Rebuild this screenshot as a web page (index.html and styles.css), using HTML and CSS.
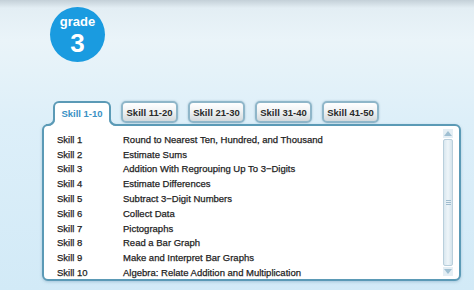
FILE: index.html
```html
<!DOCTYPE html>
<html lang="en">
  <head>
    <meta charset="UTF-8" />
    <meta name="viewport" content="width=device-width, initial-scale=1.0" />
    <title>Grade 3 Skills</title>
    <link rel="stylesheet" href="styles.css">
  </head>
  <body>
    <div class="page">
      <!-- grade badge -->
      <div class="top">
        <div class="badge">
          <span class="badge-word">grade</span>
          <span class="badge-num">3</span>
        </div>
      </div>

      <div class="skills">
        <div class="tabs">
          <div class="tab active">Skill 1-10</div>
          <div class="tab">Skill 11-20</div>
          <div class="tab">Skill 21-30</div>
          <div class="tab">Skill 31-40</div>
          <div class="tab">Skill 41-50</div>
        </div>

        <div class="panel">
          <ul class="skill-list">
            <li><span class="num">Skill 1</span><span class="name">Round to Nearest Ten, Hundred, and Thousand</span></li>
            <li><span class="num">Skill 2</span><span class="name">Estimate Sums</span></li>
            <li><span class="num">Skill 3</span><span class="name">Addition With Regrouping Up To 3&minus;Digits</span></li>
            <li><span class="num">Skill 4</span><span class="name">Estimate Differences</span></li>
            <li><span class="num">Skill 5</span><span class="name">Subtract 3&minus;Digit Numbers</span></li>
            <li><span class="num">Skill 6</span><span class="name">Collect Data</span></li>
            <li><span class="num">Skill 7</span><span class="name">Pictographs</span></li>
            <li><span class="num">Skill 8</span><span class="name">Read a Bar Graph</span></li>
            <li><span class="num">Skill 9</span><span class="name">Make and Interpret Bar Graphs</span></li>
            <li><span class="num">Skill 10</span><span class="name">Algebra: Relate Addition and Multiplication</span></li>
          </ul>

          <!-- scrollbar -->
          <div class="scrollbar">
            <div class="arrow up"></div>
            <div class="thumb"><span class="grip"></span></div>
            <div class="arrow down"></div>
          </div>
        </div>
      </div>
    </div>
  </body>
</html>
```

FILE: styles.css
```css
html, body {
  margin: 0;
  height: 100%;
}
body {
  font-family: "Liberation Sans", Arial, sans-serif;
  background: linear-gradient(180deg, #c4d0d8 0px, #e3eef4 8px, #eaf4f9 40px, #ddeff9 120px, #d2eaf7 290px);
  overflow: hidden;
}
.page {
  height: 290px;
}
.top {
  height: 101px;
  box-sizing: border-box;
  padding: 7px 0 0 50px;
}
.badge {
  width: 55px;
  height: 55px;
  border-radius: 50%;
  background: #1a9be0;
  color: #fff;
  display: flex;
  flex-direction: column;
  align-items: center;
  font-weight: bold;
}
.badge-word {
  font-size: 13px;
  margin-top: 7px;
  line-height: 15px;
}
.badge-num {
  font-size: 26px;
  line-height: 29px;
}
.skills {
  margin-left: 42px;
  width: 419px;
}
.tabs {
  display: flex;
  align-items: flex-start;
  gap: 10px;
  padding-left: 11px;
}
.tab {
  width: 57px;
  height: 22px;
  box-sizing: border-box;
  border: 2px solid #8fb6c9;
  border-radius: 5px;
  background: linear-gradient(180deg, #ffffff 0%, #f1f3f4 45%, #d3d9dc 100%);
  box-shadow: 0 0 2px rgba(90, 140, 170, 0.5);
  font-size: 9.5px;
  font-weight: bold;
  color: #2a2a2a;
  display: flex;
  align-items: center;
  justify-content: center;
}
.tab.active {
  position: relative;
  z-index: 2;
  width: 58px;
  height: 25px;
  margin-bottom: -2px;
  border-color: #5b9ab6;
  border-bottom: 0;
  border-radius: 6px 6px 0 0;
  background: #fff;
  box-shadow: none;
  color: #3a91c4;
  padding-bottom: 3px;
}
.tab.active::before,
.tab.active::after {
  content: "";
  position: absolute;
  bottom: 0;
  width: 7px;
  height: 7px;
  border-bottom: 2px solid #5b9ab6;
}
.tab.active::before {
  left: -9px;
  border-right: 2px solid #5b9ab6;
  border-bottom-right-radius: 7px;
  box-shadow: 3px 3px 0 #fff;
}
.tab.active::after {
  right: -9px;
  border-left: 2px solid #5b9ab6;
  border-bottom-left-radius: 7px;
  box-shadow: -3px 3px 0 #fff;
}
.panel {
  position: relative;
  height: 157px;
  box-sizing: border-box;
  border: 2px solid #5b9ab6;
  border-radius: 6px;
  background: #fff;
  box-shadow: 0 1px 3px rgba(80, 130, 160, 0.35);
  display: flex;
}
.skill-list {
  list-style: none;
  margin: 0;
  padding: 6px 0 0 13px;
  flex: 1;
}
.skill-list li {
  display: flex;
  height: 14.8px;
  align-items: center;
  font-size: 9.5px;
  color: #1e1e1e;
  -webkit-text-stroke: 0.25px #1e1e1e;
}
.num {
  width: 66px;
}
.scrollbar {
  width: 10px;
  margin: 3px 6px 3px 0;
  display: flex;
  flex-direction: column;
  gap: 1px;
}
.arrow {
  height: 9px;
  background: #e4eef4;
  position: relative;
}
.arrow::after {
  content: "";
  position: absolute;
  left: 1px;
  border-left: 4px solid transparent;
  border-right: 4px solid transparent;
}
.arrow.up::after {
  top: 2px;
  border-bottom: 5px solid #9fbfd2;
}
.arrow.down::after {
  bottom: 2px;
  border-top: 5px solid #9fbfd2;
}
.thumb {
  flex: 1;
  border: 1px solid #b9cfdc;
  border-radius: 2px;
  background: linear-gradient(90deg, #d9e7ef, #eef5f9 50%, #d3e3ec);
  display: flex;
  align-items: center;
  justify-content: center;
}
.grip {
  width: 5px;
  height: 5px;
  border-top: 1px solid #9fbcce;
  border-bottom: 1px solid #9fbcce;
  box-sizing: border-box;
  position: relative;
}
.grip::after {
  content: "";
  position: absolute;
  left: 0;
  right: 0;
  top: 1px;
  border-top: 1px solid #9fbcce;
}
```
